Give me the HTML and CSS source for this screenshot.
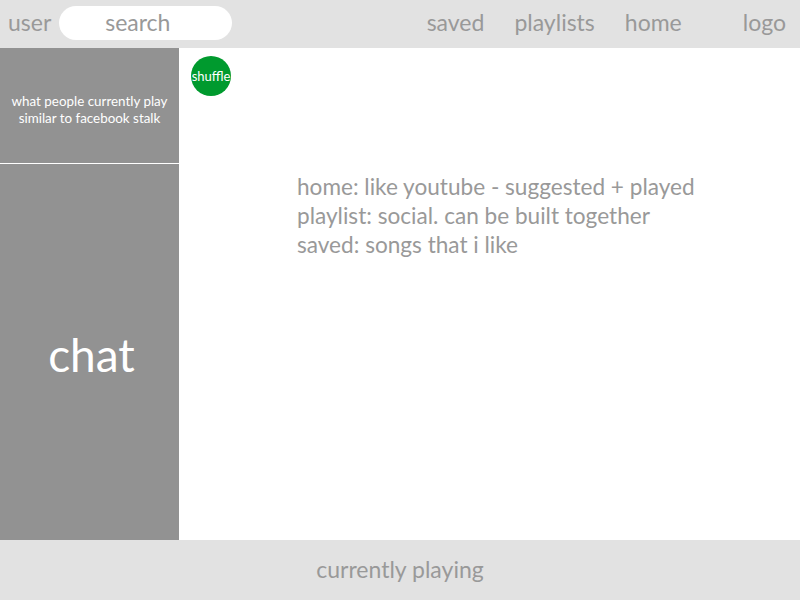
FILE: index.html
```html
<!DOCTYPE html>
<html>
<head>
<meta charset="utf-8">
<link rel="stylesheet" href="styles.css">
</head>
<body>
<div class="page">
  <header class="topbar">
    <span class="user">user</span>
    <div class="search">search</div>
    <nav class="nav">
      <span>saved</span>
      <span>playlists</span>
      <span>home</span>
    </nav>
    <span class="logo">logo</span>
  </header>
  <div class="middle">
    <aside class="sidebar">
      <div class="activity">what people currently play<br>similar to facebook stalk</div>
      <div class="chat">chat</div>
    </aside>
    <main class="content">
      <div class="shuffle">shuffle</div>
      <div class="notes">
        <p>home: like youtube - suggested + played</p>
        <p>playlist: social. can be built together</p>
        <p>saved: songs that i like</p>
      </div>
    </main>
  </div>
  <footer class="player">currently playing</footer>
</div>
</body>
</html>
```
FILE: styles.css
```css
* { box-sizing: border-box; }
html, body { margin: 0; padding: 0; }
body { font-family: "Lato", "Open Sans", sans-serif; }
.page { width: 800px; height: 600px; display: flex; flex-direction: column; }
.topbar {
  height: 48px; background: #e2e2e2; display: flex; align-items: center;
  padding: 0 14px 0 8px; color: #999; font-size: 23px; line-height: 28px;
}
.user, .nav, .logo { margin-bottom: 4px; }
.user { margin-right: 8px; }
.search {
  width: 173px; height: 34px; background: #fff; border-radius: 17px;
  display: flex; align-items: center; justify-content: center;
  padding: 0 16px 3px 0; margin-bottom: 2px;
}
.nav { margin-left: auto; display: flex; gap: 30px; }
.logo { margin-left: 61px; }
.middle { flex: 1; display: flex; }
.sidebar { width: 179px; background: #929292; display: flex; flex-direction: column; color: #fff; }
.activity {
  height: 116px; border-bottom: 1px solid #fff; display: flex; align-items: center;
  justify-content: center; text-align: center; font-size: 13.4px; line-height: 17px;
  padding-top: 8px;
}
.chat {
  flex: 1; display: flex; align-items: center; justify-content: center;
  font-size: 46px; padding: 4px 0 0 4px;
}
.content { flex: 1; background: #fff; padding: 8px 12px; }
.shuffle {
  width: 40px; height: 40px; border-radius: 50%; background: #009a2e; color: #fff;
  font-size: 13px; display: flex; align-items: center; justify-content: center;
}
.notes { margin: 76px 0 0 106px; color: #999; font-size: 22.6px; line-height: 29px; }
.notes p { margin: 0; }
.player {
  height: 60px; background: #e2e2e2; color: #999; font-size: 23px;
  display: flex; align-items: center; justify-content: center; padding-bottom: 3px;
}
```
